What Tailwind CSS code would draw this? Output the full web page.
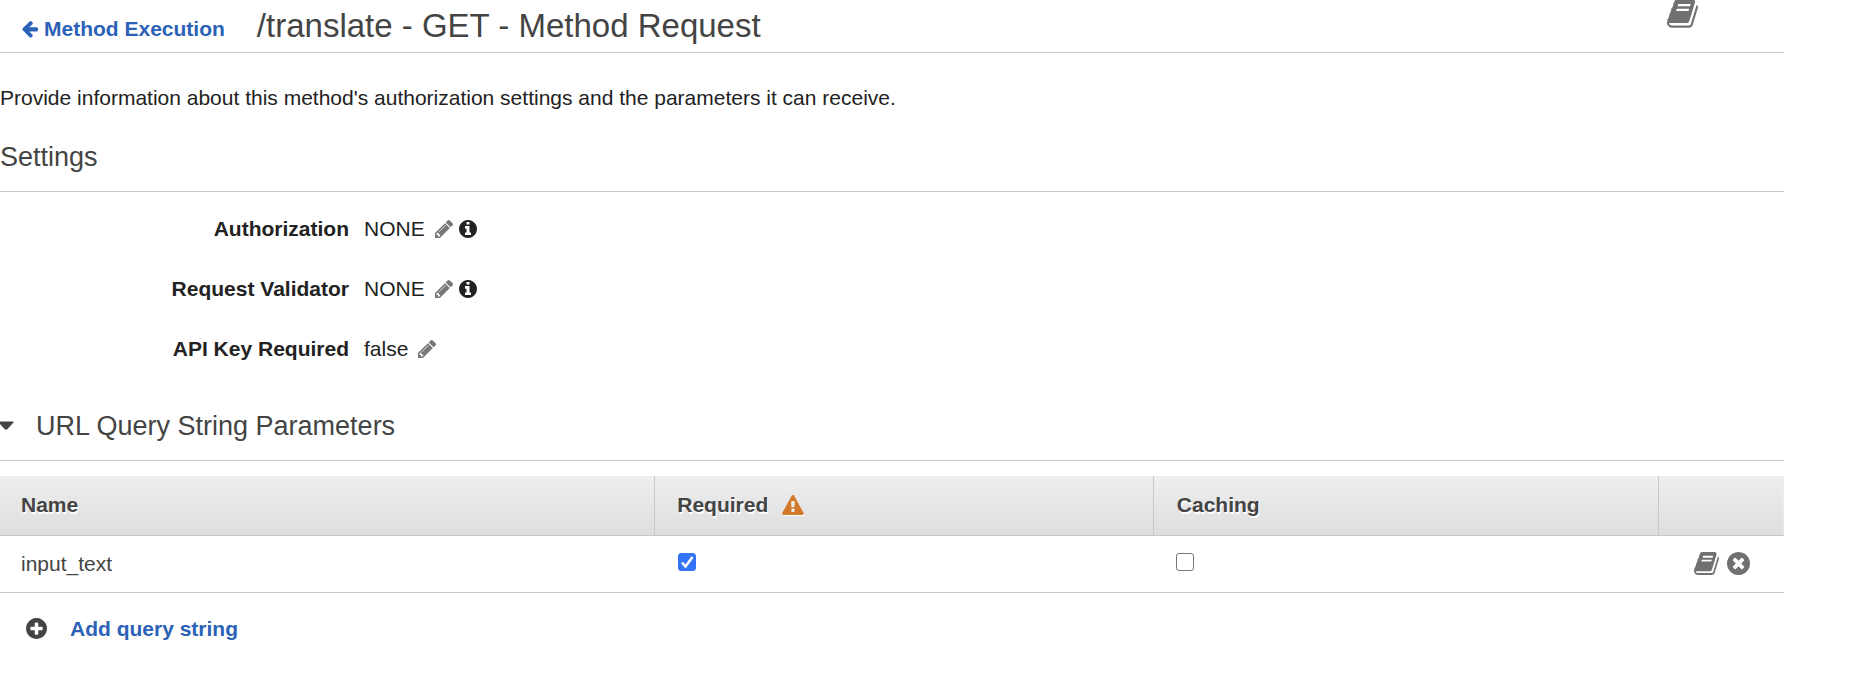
<!DOCTYPE html>
<html lang="en">
<head>
<meta charset="utf-8">
<title>/translate - GET - Method Request</title>
<script src="https://cdn.jsdelivr.net/npm/@tailwindcss/browser@4"></script>
</head>
<body class="bg-white font-['Helvetica_Neue','Liberation_Sans',Arial,sans-serif] text-[21px] leading-[30px] text-[#222]">
<svg class="hidden" aria-hidden="true">
  <symbol id="arrow" viewBox="64 149 1600 1558"><path d="M1664 896v128q0 53-32.5 90.5t-84.5 37.5h-704l293 294q38 36 38 90t-38 90l-75 76q-37 37-90 37-52 0-91-37l-651-652q-37-37-37-90 0-52 37-91l651-650q38-38 91-38 52 0 90 38l75 74q38 38 38 91t-38 91l-293 293h704q52 0 84.5 37.5t32.5 90.5z"/></symbol>
  <symbol id="book" viewBox="64 128 1666 1536"><path d="M1703 478q40 57 18 129l-275 906q-19 64-76.5 107.5t-122.5 43.5h-923q-77 0-148.5-53.5t-99.5-131.5q-24-67-2-127 0-4 3-27t4-37q1-8-3-21.5t-3-19.5q2-11 8-21t16.5-23.5 16.5-23.5q23-38 45-91.5t30-91.5q3-10 .5-30t-.5-28q3-11 17-28t17-23q21-36 42-92t25-90q1-9-2.5-32t.5-28q4-13 22-30.5t22-22.5q19-26 42.5-84.5t27.5-96.5q1-8-3-25.5t-2-26.5q2-8 9-18t18-23 17-21q8-12 16.5-30.5t15-35 16-36 19.5-32 26.5-23.5 36-11.5 47.5 5.5l-1 3q38-9 51-9h761q74 0 114 56t18 130l-274 906q-36 119-71.5 153.5t-128.5 34.5h-869q-27 0-38 15-11 16-1 43 24 70 144 70h923q29 0 56-15.5t35-41.5l300-987q7-22 5-57 38 15 59 43zm-1064 2q-4 13 2 22.5t20 9.5h608q13 0 25.5-9.5t16.5-22.5l21-64q4-13-2-22.5t-20-9.5h-608q-13 0-25.5 9.5t-16.5 22.5zm-83 256q-4 13 2 22.5t20 9.5h608q13 0 25.5-9.5t16.5-22.5l21-64q4-13-2-22.5t-20-9.5h-608q-13 0-25.5 9.5t-16.5 22.5z"/></symbol>
  <symbol id="pencil" viewBox="128 149 1515 1515"><path d="M491 1536l91-91-235-235-91 91v107h128v128h107zm523-928q0-22-22-22-10 0-17 7l-542 542q-7 7-7 17 0 22 22 22 10 0 17-7l542-542q7-7 7-17zm-54-192l416 416-832 832h-416v-416zm683 96q0 53-37 90l-166 166-416-416 166-165q36-38 90-38 53 0 91 38l235 234q37 39 37 91z"/></symbol>
  <symbol id="info" viewBox="128 128 1536 1536"><path d="M1152 1376v-160q0-14-9-23t-23-9h-96v-512q0-14-9-23t-23-9h-320q-14 0-23 9t-9 23v160q0 14 9 23t23 9h96v320h-96q-14 0-23 9t-9 23v160q0 14 9 23t23 9h448q14 0 23-9t9-23zm-128-896v-160q0-14-9-23t-23-9h-192q-14 0-23 9t-9 23v160q0 14 9 23t23 9h192q14 0 23-9t9-23zm640 416q0 209-103 385.5t-279.5 279.5-385.5 103-385.5-103-279.5-279.5-103-385.5 103-385.5 279.5-279.5 385.5-103 385.5 103 279.5 279.5 103 385.5z"/></symbol>
  <symbol id="remove" viewBox="128 128 1536 1536"><path d="M1277 1122q0-26-19-45l-181-181 181-181q19-19 19-45 0-27-19-46l-90-90q-19-19-46-19-26 0-45 19l-181 181-181-181q-19-19-45-19-27 0-46 19l-90 90q-19 19-19 46 0 26 19 45l181 181-181 181q-19 19-19 45 0 27 19 46l90 90q19 19 46 19 26 0 45-19l181-181 181 181q19 19 45 19 27 0 46-19l90-90q19-19 19-46zm387-226q0 209-103 385.5t-279.5 279.5-385.5 103-385.5-103-279.5-279.5-103-385.5 103-385.5 279.5-279.5 385.5-103 385.5 103 279.5 279.5 103 385.5z"/></symbol>
  <symbol id="plus" viewBox="128 128 1536 1536"><path d="M1344 960v-128q0-26-19-45t-45-19h-256v-256q0-26-19-45t-45-19h-128q-26 0-45 19t-19 45v256h-256q-26 0-45 19t-19 45v128q0 26 19 45t45 19h256v256q0 26 19 45t45 19h128q26 0 45-19t19-45v-256h256q26 0 45-19t19-45zm320-64q0 209-103 385.5t-279.5 279.5-385.5 103-385.5-103-279.5-279.5-103-385.5 103-385.5 279.5-279.5 385.5-103 385.5 103 279.5 279.5 103 385.5z"/></symbol>
  <symbol id="warning" viewBox="0 0 1792 1664"><path d="M1024 1375v-190q0-14-9.5-23.5t-22.5-9.5h-192q-13 0-22.5 9.5t-9.5 23.5v190q0 14 9.5 23.5t22.5 9.5h192q13 0 22.5-9.5t9.5-23.5zm-2-374l18-459q0-12-10-19-13-11-24-11h-220q-11 0-24 11-10 7-10 21l17 457q0 10 10 16.5t24 6.5h185q14 0 23.5-6.5t10.5-16.5zm-14-934l768 1408q35 63-2 126-17 29-46.5 46t-63.5 17h-1536q-34 0-63.5-17t-46.5-46q-37-63-2-126l768-1408q17-31 47-49t65-18 65 18 47 49z"/></symbol>
</svg>

<main class="pr-[68px]">
  <header class="flex h-[53px] items-start border-b border-[#c8c8c8] pl-[21px]">
    <a href="#" class="mt-3.5 flex items-center gap-1.5 font-bold text-[#2b62b7]">
      <svg class="h-[18px] w-[17px] fill-current" aria-hidden="true"><use href="#arrow"/></svg>Method Execution</a>
    <h1 class="mt-1.5 ml-8 text-[33px] leading-10 text-[#444]">/translate - GET - Method Request</h1>
    <button type="button" aria-label="Documentation" class="-mt-px mr-[86px] ml-auto text-[#707070]"><svg class="h-[29px] w-[31px] fill-current"><use href="#book"/></svg></button>
  </header>

  <p class="mt-[30px]">Provide information about this method's authorization settings and the parameters it can receive.</p>

  <section>
    <h2 class="mt-[26px] border-b border-[#c8c8c8] pb-4 text-[27px] leading-9 text-[#444]">Settings</h2>
    <dl class="mt-[22px] flex flex-col gap-[30px]">
      <div class="flex gap-[15px]">
        <dt class="w-[349px] text-right font-bold">Authorization</dt>
        <dd class="flex items-center">NONE
          <button type="button" aria-label="Edit authorization" class="ml-2.5 text-[#777]"><svg class="h-[18px] w-[18px] fill-current"><use href="#pencil"/></svg></button>
          <button type="button" aria-label="About authorization" class="ml-1.5"><svg class="h-[18px] w-[18px] fill-current"><use href="#info"/></svg></button>
        </dd>
      </div>
      <div class="flex gap-[15px]">
        <dt class="w-[349px] text-right font-bold">Request Validator</dt>
        <dd class="flex items-center">NONE
          <button type="button" aria-label="Edit request validator" class="ml-2.5 text-[#777]"><svg class="h-[18px] w-[18px] fill-current"><use href="#pencil"/></svg></button>
          <button type="button" aria-label="About request validator" class="ml-1.5"><svg class="h-[18px] w-[18px] fill-current"><use href="#info"/></svg></button>
        </dd>
      </div>
      <div class="flex gap-[15px]">
        <dt class="w-[349px] text-right font-bold">API Key Required</dt>
        <dd class="flex items-center">false
          <button type="button" aria-label="Edit API key required" class="ml-2.5 text-[#777]"><svg class="h-[18px] w-[18px] fill-current"><use href="#pencil"/></svg></button>
        </dd>
      </div>
    </dl>
  </section>

  <section class="text-[#444]">
    <h2 class="mt-11 border-b border-[#c8c8c8] pb-4 text-[27px] leading-9">
      <button type="button" aria-expanded="true" class="flex items-center gap-[22px]"><svg class="mb-0.5 h-[9px] w-3.5 fill-current" viewBox="0 0 14 9" aria-hidden="true"><path d="M0 0.500H13Q14 0.500 13.500 1.500L7.500 8Q6 9.300 4.500 8L0 3Z"/></svg>URL Query String Parameters</button>
    </h2>
    <table class="mt-[15px] w-full table-fixed border-collapse text-left">
      <thead class="bg-linear-to-b from-[#eee] to-[#dedede] text-shadow-[1px_2px_0_#fff]">
        <tr class="h-[59px] border-b border-[#c8c8c8]">
          <th scope="col" class="w-[36.7%] border-r border-[#c8c8c8] pl-[21px]">Name</th>
          <th scope="col" class="w-[27.95%] border-r border-[#c8c8c8] pl-[22px]"><span class="flex items-center gap-3.5">Required <svg role="img" aria-label="Warning" class="h-5 w-[22px] fill-[#d17a2c] drop-shadow-[1px_1px_0_#fff]"><use href="#warning"/></svg></span></th>
          <th scope="col" class="w-[28.3%] border-r border-[#c8c8c8] pl-[23px]">Caching</th>
          <th scope="col" aria-label="Actions"></th>
        </tr>
      </thead>
      <tbody>
        <tr class="h-[57px] border-b border-[#c8c8c8]">
          <td class="pl-[21px]">input_text</td>
          <td class="pl-[23px]"><label class="flex pb-1"><input type="checkbox" checked aria-label="Required" class="peer h-[18px] w-[18px] appearance-none rounded-[3px] border border-[#767676] bg-white checked:border-[#3373f5] checked:bg-[#3373f5]"><svg class="-ml-[18px] hidden h-[18px] w-[18px] fill-none stroke-white stroke-[2.5] peer-checked:block" viewBox="0 0 18 18" aria-hidden="true"><path d="M4 9.500L7.500 13.500L14.500 4"/></svg></label></td>
          <td class="pl-[23px]"><label class="flex pb-1"><input type="checkbox" aria-label="Caching" class="peer h-[18px] w-[18px] appearance-none rounded-[3px] border border-[#767676] bg-white checked:border-[#3373f5] checked:bg-[#3373f5]"><svg class="-ml-[18px] hidden h-[18px] w-[18px] fill-none stroke-white stroke-[2.5] peer-checked:block" viewBox="0 0 18 18" aria-hidden="true"><path d="M4 9.500L7.500 13.500L14.500 4"/></svg></label></td>
          <td><div class="flex items-center justify-end gap-2 pr-[34px] text-[#707070]">
            <button type="button" aria-label="Documentation"><svg class="h-[23px] w-[25px] fill-current"><use href="#book"/></svg></button>
            <button type="button" aria-label="Remove input_text"><svg class="h-[23px] w-[23px] fill-current"><use href="#remove"/></svg></button>
          </div></td>
        </tr>
      </tbody>
    </table>
    <a href="#" class="mt-[21px] ml-[26px] inline-flex items-center gap-[23px] font-bold text-[#2b62b7]"><svg class="h-[21px] w-[21px] fill-[#444]" aria-hidden="true"><use href="#plus"/></svg>Add query string</a>
  </section>
</main>
</body>
</html>
